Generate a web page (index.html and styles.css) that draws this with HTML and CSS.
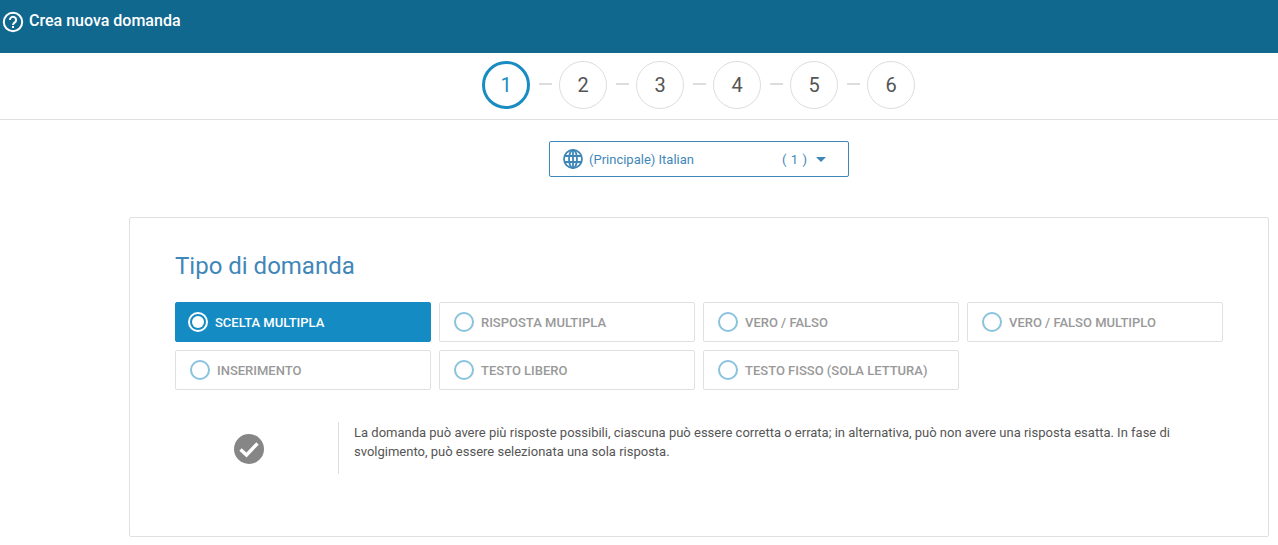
FILE: index.html
```html
<!DOCTYPE html>
<html lang="en">

<head>
    <meta charset="UTF-8">
    <title>Crea nuova domanda</title>
    <link rel="stylesheet" href="styles.css">
</head>

<body>
    <header class="header">
        <svg class="help-icon" width="22" height="22" viewBox="0 0 22 22">
            <circle cx="11" cy="11" r="9.2" fill="none" stroke="#fff" stroke-width="2"></circle>
            <path d="M7.9 8.9a3.1 3.1 0 1 1 4.9 2.5c-1.1.8-1.8 1.3-1.8 2.6" fill="none" stroke="#fff" stroke-width="2"></path>
            <rect x="10" y="15" width="2" height="2" fill="#fff"></rect>
        </svg>
        <span class="header-title">Crea nuova domanda</span>
    </header>
    <nav class="steps">
        <div class="step active">1</div>
        <div class="step-dash"></div>
        <div class="step">2</div>
        <div class="step-dash"></div>
        <div class="step">3</div>
        <div class="step-dash"></div>
        <div class="step">4</div>
        <div class="step-dash"></div>
        <div class="step">5</div>
        <div class="step-dash"></div>
        <div class="step">6</div>
    </nav>
    <div class="lang-row">
        <div class="lang-select">
            <svg width="20" height="20" viewBox="0 0 20 20" fill="none" stroke="#3f87b8" stroke-width="1.8">
                <circle cx="10" cy="10" r="9"></circle>
                <ellipse cx="10" cy="10" rx="4" ry="9"></ellipse>
                <path d="M10 1v18M1.5 7h17M1.5 13h17"></path>
            </svg>
            <span class="lang-name">(Principale) Italian</span>
            <span class="lang-count">( 1 )</span>
            <span class="lang-caret"></span>
        </div>
    </div>
    <main class="card">
        <h2 class="card-title">Tipo di domanda</h2>
        <div class="types">
            <div class="type selected"><span class="radio"></span>SCELTA MULTIPLA</div>
            <div class="type"><span class="radio"></span>RISPOSTA MULTIPLA</div>
            <div class="type"><span class="radio"></span>VERO / FALSO</div>
            <div class="type"><span class="radio"></span>VERO / FALSO MULTIPLO</div>
            <div class="type"><span class="radio"></span>INSERIMENTO</div>
            <div class="type"><span class="radio"></span>TESTO LIBERO</div>
            <div class="type"><span class="radio"></span>TESTO FISSO (SOLA LETTURA)</div>
        </div>
        <div class="description">
            <div class="desc-icon">
                <svg width="30" height="30" viewBox="0 0 30 30">
                    <circle cx="15" cy="15" r="15" fill="#868686"></circle>
                    <path d="M6.5 15.5l6 5.5L23.5 9.5" fill="none" stroke="#fff" stroke-width="3.4"></path>
                </svg>
            </div>
            <p class="desc-text">La domanda può avere più risposte possibili, ciascuna può essere corretta o errata; in alternativa, può non avere una risposta esatta. In fase di svolgimento, può essere selezionata una sola risposta.</p>
        </div>
    </main>
</body>

</html>
```

FILE: styles.css
```css
body {
    font-family: Roboto, "Liberation Sans", sans-serif;
    margin: 0;
    padding: 0;
    background: #fff;
    color: #555;
    height: 545px;
    overflow: hidden;
}

.header {
    height: 53px;
    background: #10688f;
    color: #fff;
    display: flex;
    align-items: flex-start;
    gap: 5px;
    padding: 11px 0 0 2px;
    box-sizing: border-box;
}

.header-title {
    font-size: 16px;
    font-weight: 500;
    line-height: 20px;
}

.steps {
    height: 67px;
    box-sizing: border-box;
    border-bottom: 1px solid #e0e0e0;
    display: flex;
    justify-content: center;
    align-items: flex-start;
    padding-top: 8px;
    padding-left: 119px;
}

.step {
    width: 48px;
    height: 48px;
    box-sizing: border-box;
    border: 1px solid #ddd;
    border-radius: 50%;
    display: flex;
    align-items: center;
    justify-content: center;
    font-size: 20px;
    color: #555;
}

.step.active {
    border: 3px solid #1a8cc2;
    color: #1a8cc2;
}

.step-dash {
    width: 13px;
    height: 2px;
    background: #ddd;
    margin: 22px 7px 0 9px;
}

.lang-row {
    display: flex;
    justify-content: center;
    padding-top: 21px;
    padding-left: 120px;
}

.lang-select {
    width: 300px;
    height: 36px;
    box-sizing: border-box;
    border: 1px solid #3f87b8;
    border-radius: 2px;
    display: flex;
    align-items: center;
    padding-left: 13px;
    color: #3f87b8;
    font-size: 13px;
}

.lang-name {
    margin-left: 6px;
    width: 193px;
}

.lang-count {
    font-size: 13px;
    letter-spacing: 0.6px;
    width: 34px;
}

.lang-caret {
    width: 0;
    height: 0;
    border-left: 5px solid transparent;
    border-right: 5px solid transparent;
    border-top: 5px solid #3f87b8;
}

.card {
    margin: 40px 9px 0 129px;
    height: 320px;
    box-sizing: border-box;
    border: 1px solid #e0e0e0;
    border-radius: 2px;
    padding: 33px 45px 0;
}

.card-title {
    margin: 0 0 21px;
    font-size: 24px;
    line-height: 30px;
    font-weight: 400;
    color: #3f87b8;
}

.types {
    display: grid;
    grid-template-columns: repeat(4, 256px);
    gap: 8px;
}

.type {
    height: 40px;
    box-sizing: border-box;
    border: 1px solid #e0e0e0;
    border-radius: 2px;
    display: flex;
    align-items: center;
    gap: 7px;
    padding-left: 14px;
    font-size: 13px;
    font-weight: 500;
    color: #999;
}

.type.selected {
    background: #148bc2;
    border-color: #148bc2;
    color: #fff;
    padding-left: 12px;
    gap: 7px;
}

.radio {
    width: 20px;
    height: 20px;
    box-sizing: border-box;
    border: 2px solid #8ac3de;
    border-radius: 50%;
}

.type.selected .radio {
    border: 2px solid #fff;
    position: relative;
}

.type.selected .radio::after {
    content: "";
    position: absolute;
    top: 2px;
    left: 2px;
    width: 12px;
    height: 12px;
    border-radius: 50%;
    background: #fff;
}

.description {
    display: flex;
    margin-top: 32px;
    height: 52px;
}

.desc-icon {
    width: 164px;
    display: flex;
    justify-content: center;
    align-items: center;
    padding-right: 16px;
    box-sizing: border-box;
    border-right: 1px solid #ddd;
    padding-top: 2px;
}

.desc-text {
    margin: 1px 0 0 15px;
    width: 850px;
    font-size: 13px;
    line-height: 19px;
    color: #555;
}
```
